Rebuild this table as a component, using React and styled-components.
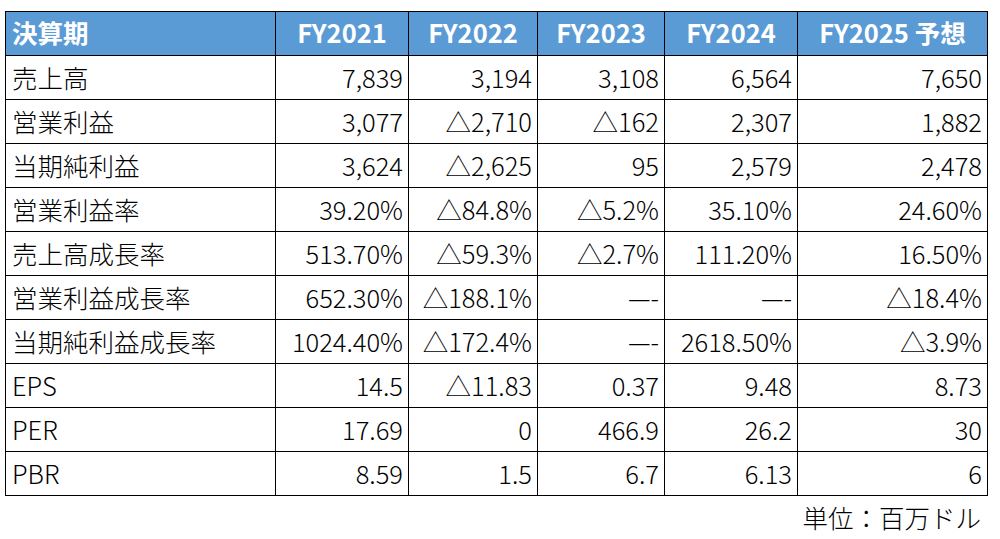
import React from 'react'
import styled, {createGlobalStyle} from 'styled-components'

const GlobalStyle = createGlobalStyle`
  body {
    margin: 0;
    background: #fff;
    font-family: "Noto Sans CJK JP", "Noto Sans", sans-serif;
  }
`

const columns = [
  {label: '決算期', width: 270},
  {label: 'FY2021', width: 133},
  {label: 'FY2022', width: 129},
  {label: 'FY2023', width: 127},
  {label: 'FY2024', width: 133},
  {label: 'FY2025 予想', width: 190},
]

const rows = [
  ['売上高', '7,839', '3,194', '3,108', '6,564', '7,650'],
  ['営業利益', '3,077', '△2,710', '△162', '2,307', '1,882'],
  ['当期純利益', '3,624', '△2,625', '95', '2,579', '2,478'],
  ['営業利益率', '39.20%', '△84.8%', '△5.2%', '35.10%', '24.60%'],
  ['売上高成長率', '513.70%', '△59.3%', '△2.7%', '111.20%', '16.50%'],
  ['営業利益成長率', '652.30%', '△188.1%', '—-', '—-', '△18.4%'],
  ['当期純利益成長率', '1024.40%', '△172.4%', '—-', '2618.50%', '△3.9%'],
  ['EPS', '14.5', '△11.83', '0.37', '9.48', '8.73'],
  ['PER', '17.69', '0', '466.9', '26.2', '30'],
  ['PBR', '8.59', '1.5', '6.7', '6.13', '6'],
]

export default function App() {
  return (
    <Page>
      <GlobalStyle/>
      <Sheet>
        <Table>
          <colgroup>
            {columns.map(c => <col key={c.label} style={{width: c.width}}/>)}
          </colgroup>
          <thead>
            <tr>
              {columns.map((c, i) => (
                <HeadCell key={c.label} $first={i === 0}>{c.label}</HeadCell>
              ))}
            </tr>
          </thead>
          <tbody>
            {rows.map(r => (
              <tr key={r[0]}>
                {r.map((v, i) => (
                  <Cell key={i} $first={i === 0}>{v}</Cell>
                ))}
              </tr>
            ))}
          </tbody>
        </Table>
        <Unit>単位：百万ドル</Unit>
      </Sheet>
    </Page>
  )
}

let Page = styled.div`
  width: 1000px;
  height: 539px;
  padding: 11px 0 0 5px;
  box-sizing: border-box;
`

let Sheet = styled.div`
  width: 982px;
  display: flex;
  flex-direction: column;
`

let Table = styled.table`
  border-collapse: collapse;
  table-layout: fixed;
  width: 982px;
  font-size: 25.5px;
  color: #000;
`

let HeadCell = styled.th`
  background: #5b9bd5;
  color: #fff;
  font-weight: 700;
  height: 44px;
  padding: 0 6px 3px;
  box-sizing: border-box;
  border: 1px solid #000;
  text-align: ${p => p.$first ? 'left' : 'center'};
  white-space: nowrap;
  line-height: 1;
`

let Cell = styled.td`
  height: 44px;
  padding: 0 5px 2px 6px;
  box-sizing: border-box;
  border: 1px solid #000;
  text-align: ${p => p.$first ? 'left' : 'right'};
  white-space: nowrap;
  line-height: 1;
  font-weight: 300;
`

let Unit = styled.div`
  align-self: flex-end;
  padding-right: 6px;
  font-size: 25.5px;
  font-weight: 300;
  line-height: 42px;
  color: #000;
`
